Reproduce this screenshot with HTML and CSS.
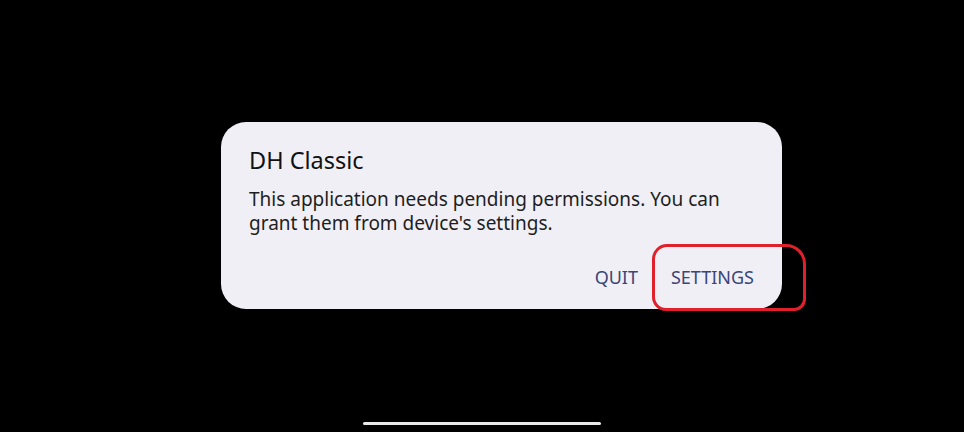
FILE: index.html
```html
<!DOCTYPE html>
<html>
<head>
<meta charset="utf-8">
<link rel="stylesheet" href="styles.css">
</head>
<body>
<div class="screen">
  <div class="dialog">
    <h1 class="title">DH Classic</h1>
    <p class="message">This application needs pending permissions. You can grant them from device's settings.</p>
    <div class="actions">
      <span class="btn">QUIT</span>
      <span class="btn">SETTINGS</span>
    </div>
    <div class="mark"></div>
  </div>
  <div class="home"></div>
</div>
</body>
</html>
```
FILE: styles.css
```css
html, body { margin: 0; padding: 0; background: #000; }
.screen {
  width: 964px; height: 432px; background: #000;
  display: flex; flex-direction: column; align-items: center;
  font-family: "Noto Sans", "Open Sans", sans-serif;
}
.dialog {
  position: relative;
  margin-top: 122px;
  margin-left: 39px;
  width: 561px; height: 187px; box-sizing: border-box;
  background: #f0eff5;
  border-radius: 25px;
  padding: 23px 28px 0 28px;
}
.title {
  margin: 0; font-weight: 400; font-size: 23.5px; line-height: 30px; color: #111;
}
.message {
  margin: 12px 0 0 0; font-size: 19px; line-height: 24px; color: #1e1e1e;
  width: 490px;
}
.actions {
  display: flex; justify-content: flex-end; gap: 33px;
  margin-top: 31px;
}
.btn { font-size: 18px; line-height: 22px; color: #3b4677; }
.mark {
  position: absolute; left: 431px; top: 122px; width: 154px; height: 67px;
  box-sizing: border-box; border: 3px solid #e0202a; border-radius: 15px 20px 12px 14px;
}
.home {
  margin-top: 113px; width: 238px; height: 3px; border-radius: 2px; background: #e8e8e8;
}
```
